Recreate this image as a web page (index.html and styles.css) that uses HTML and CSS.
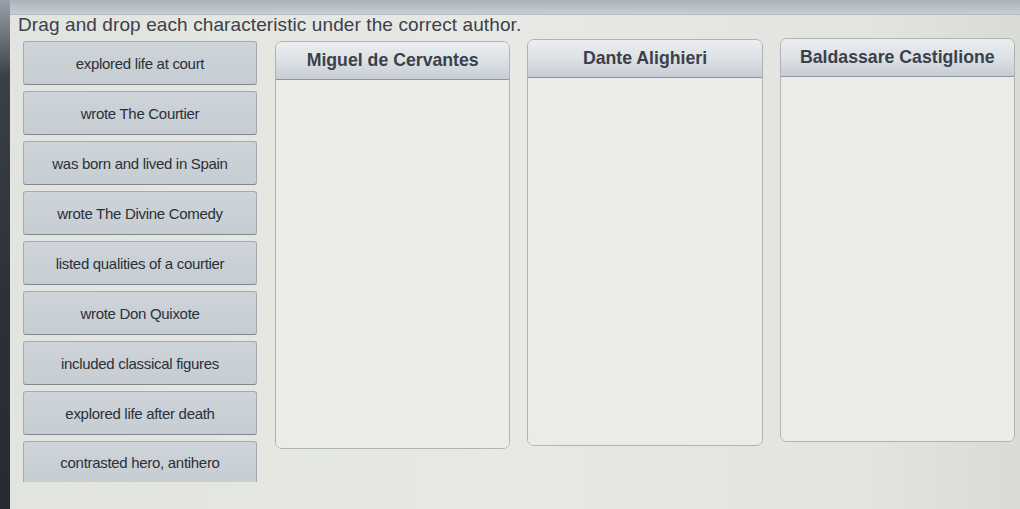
FILE: index.html
```html
<!DOCTYPE html>
<html>
<head>
<meta charset="utf-8">
<link rel="stylesheet" href="styles.css">
</head>
<body>
<div class="screen">
  <div class="edge"></div>
  <div class="page">
    <div class="topbar"></div>
    <div class="title"><h1>Drag and drop each characteristic under the correct author.</h1></div>
    <div class="board">
      <div class="bank">
        <div class="chip">explored life at court</div>
        <div class="chip">wrote The Courtier</div>
        <div class="chip">was born and lived in Spain</div>
        <div class="chip">wrote The Divine Comedy</div>
        <div class="chip">listed qualities of a courtier</div>
        <div class="chip">wrote Don Quixote</div>
        <div class="chip">included classical figures</div>
        <div class="chip">explored life after death</div>
        <div class="chip chip-last">contrasted hero, antihero</div>
      </div>
      <div class="targets">
        <div class="target t1">
          <div class="target-head">Miguel de Cervantes</div>
          <div class="target-body"></div>
        </div>
        <div class="target t2">
          <div class="target-head">Dante Alighieri</div>
          <div class="target-body"></div>
        </div>
        <div class="target t3">
          <div class="target-head">Baldassare Castiglione</div>
          <div class="target-body"></div>
        </div>
      </div>
    </div>
  </div>
</div>
</body>
</html>
```
FILE: styles.css
```css
html, body {
  margin: 0;
  padding: 0;
  width: 1020px;
  height: 509px;
  overflow: hidden;
  background: #e4e6e1;
  font-family: "Liberation Sans", Arial, sans-serif;
}

.screen {
  display: flex;
  height: 509px;
}

.edge {
  width: 10px;
  flex: none;
  background: linear-gradient(180deg, #9aa1aa 0%, #3a404a 15%, #2b3039 60%, #262b33 100%);
}

.page {
  flex: 1;
  display: flex;
  flex-direction: column;
  background: linear-gradient(90deg, #e2e4df 0%, #e8e9e5 50%, #e3e4df 85%, #d9dbd6 100%);
}

.topbar {
  height: 14px;
  flex: none;
  background: linear-gradient(180deg, #a9b3bd 0%, #bec5cc 70%, #c9ced2 100%);
  border-bottom: 1px solid #b6bcc2;
}

.title {
  height: 20px;
  padding-left: 8px;
}

.title h1 {
  margin: 0;
  font-size: 19px;
  line-height: 20px;
  font-weight: normal;
  color: #3b414a;
  letter-spacing: 0.1px;
}

.board {
  display: flex;
  gap: 18px;
  padding: 6px 0 0 13px;
}

.bank {
  width: 234px;
  flex: none;
  display: flex;
  flex-direction: column;
  gap: 6px;
}

.chip {
  height: 42px;
  display: flex;
  align-items: center;
  justify-content: center;
  background: linear-gradient(180deg, #ced4d9 0%, #c6cdd3 100%);
  border: 1px solid #a2aab1;
  border-bottom-color: #7f878f;
  border-radius: 3px;
  font-size: 15px;
  color: #2a3038;
  letter-spacing: -0.3px;
}

.chip-last {
  height: 40px;
  border-bottom: none;
  border-radius: 3px 3px 0 0;
}

.targets {
  flex: 1;
  display: flex;
  gap: 17px;
  padding-right: 5px;
}

.target {
  flex: 1;
  display: flex;
  flex-direction: column;
  height: 406px;
  border: 1px solid #aeb3b7;
  border-radius: 7px;
  overflow: hidden;
  background: #eaebe7;
}

.t1 { margin-top: 0; }
.t2 { margin-top: -2px; height: 405px; }
.t3 { margin-top: -3px; height: 402px; }

.target-head {
  height: 37px;
  flex: none;
  display: flex;
  align-items: center;
  justify-content: center;
  background: linear-gradient(180deg, #eceeef 0%, #dde1e5 50%, #c6cdd4 100%);
  border-bottom: 1px solid #8e959c;
  font-size: 17.7px;
  font-weight: bold;
  color: #3a414b;
}

.target-body {
  flex: 1;
  background: #ebece8;
}
```
